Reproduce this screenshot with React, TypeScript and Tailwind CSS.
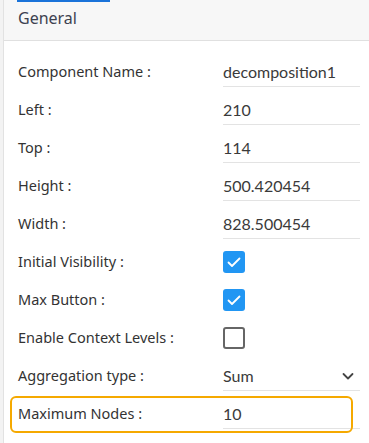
import React from 'react';

// Property rows shown in the "General" panel
interface Row {
  label: string;
  kind: 'text' | 'check' | 'select';
  value?: string;
  checked?: boolean;
}

const ROWS: Row[] = [
  { label: 'Component Name :', kind: 'text', value: 'decomposition1' },
  { label: 'Left :', kind: 'text', value: '210' },
  { label: 'Top :', kind: 'text', value: '114' },
  { label: 'Height :', kind: 'text', value: '500.420454' },
  { label: 'Width :', kind: 'text', value: '828.500454' },
  { label: 'Initial Visibility :', kind: 'check', checked: true },
  { label: 'Max Button :', kind: 'check', checked: true },
  { label: 'Enable Context Levels :', kind: 'check', checked: false },
  { label: 'Aggregation type :', kind: 'select', value: 'Sum' },
  { label: 'Maximum Nodes :', kind: 'text', value: '10' },
];

function Check({ checked }: { checked?: boolean }) {
  if (!checked) {
    return <div className="h-[22px] w-[22px] rounded-[3px] border-2 border-[#666666] bg-white" />;
  }
  return (
    <div className="flex h-[22px] w-[22px] items-center justify-center rounded-[3px] bg-[#2196f3]">
      <svg width="16" height="16" viewBox="0 0 16 16" fill="none">
        <path d="M2.5 8.5l3.5 3.5 7.5-7.5" stroke="white" strokeWidth="1.8" strokeLinecap="round" strokeLinejoin="round" />
      </svg>
    </div>
  );
}

export default function App() {
  return (
    <div
      className="relative h-[443px] w-[369px] overflow-hidden bg-[#f3f3f3] pl-[3px]"
      style={{ fontFamily: '"Noto Sans", "Open Sans", sans-serif' }}
    >
      {/* active tab marker */}
      <div className="absolute left-[17px] top-0 h-[2px] w-[93px] bg-[#1a73d9]" />

      <div className="h-full border-l border-[#e2e2e2] bg-white">
        <div className="flex h-[41px] items-center border-b border-[#e0e0e0] bg-[#f7f7f7] pb-[4px] pl-[14px] text-[16px] text-[#3d4250]">
          General
        </div>

        <div className="pt-[12px]">
          {ROWS.map((row) => (
            <div key={row.label} className="flex h-[38px] items-center">
              <div className="w-[219px] pl-[14px] text-[14.5px] text-[#333333]">{row.label}</div>
              {row.kind === 'check' ? (
                <Check checked={row.checked} />
              ) : (
                <div className="flex h-[30px] w-[137px] items-center justify-between border-b border-[#e3e3e3] font-['Lato',sans-serif] text-[16px] text-[#3a3a3a]">
                  <span>{row.value}</span>
                  {row.kind === 'select' && (
                    <svg width="14" height="14" viewBox="0 0 14 14" fill="none" className="mr-[5px]">
                      <path d="M2.5 5l4.5 4.5L11.5 5" stroke="#444" strokeWidth="1.8" strokeLinecap="round" strokeLinejoin="round" />
                    </svg>
                  )}
                </div>
              )}
            </div>
          ))}
        </div>
      </div>

      {/* highlight annotation around Maximum Nodes */}
      <div className="absolute left-[10px] top-[396px] h-[37px] w-[343px] rounded-[6px] border-2 border-[#f5a900]" />
    </div>
  );
}
